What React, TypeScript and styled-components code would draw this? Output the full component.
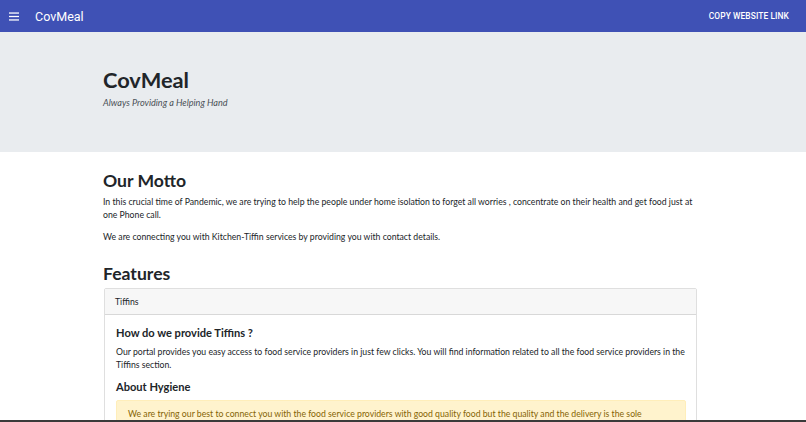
import React from 'react';
import styled, { createGlobalStyle } from 'styled-components';

const GlobalStyle = createGlobalStyle`
  html, body {
    margin: 0;
    padding: 0;
    background: #ffffff;
  }
  body {
    font-family: Lato, "Open Sans", sans-serif;
    color: #212529;
    overflow: hidden;
  }
  * {
    box-sizing: border-box;
  }
`;

const AppBar = styled.header`
  height: 32px;
  background: #3f51b5;
  display: flex;
  align-items: center;
  padding: 0 17px 0 9px;
  box-shadow: 0 1px 2px rgba(0, 0, 0, 0.25);
  font-family: Roboto, "Liberation Sans", sans-serif;
  color: #ffffff;
`;

const MenuButton = styled.button`
  background: none;
  border: none;
  padding: 0;
  margin-right: 16px;
  width: 10px;
  height: 10px;
  display: flex;
  align-items: center;
  justify-content: center;
  color: #ffffff;
`;

const Brand = styled.div`
  font-size: 12.5px;
  flex: 1;
`;

const CopyLink = styled.button`
  background: none;
  border: none;
  padding: 0;
  color: #ffffff;
  font-family: Roboto, "Liberation Sans", sans-serif;
  font-size: 8.4px;
  font-weight: 500;
  letter-spacing: 0.1px;
  text-transform: uppercase;
`;

const Jumbotron = styled.section`
  background: #e9ecef;
  height: 120px;
  padding: 35px 0 0 103px;
`;

const JumboTitle = styled.h1`
  margin: 0;
  font-size: 21.8px;
  font-weight: 700;
  line-height: 1.2;
  color: #212529;
`;

const Tagline = styled.p`
  margin: 4px 0 0;
  font-size: 9.1px;
  font-style: italic;
  color: #495057;
`;

const Container = styled.main`
  width: 594px;
  margin-left: 103px;
  padding-top: 18px;
`;

const SectionTitle = styled.h2`
  margin: 0 0 3px;
  font-size: 17.6px;
  font-weight: 700;
  line-height: 1.25;
  color: #212529;
`;

const Paragraph = styled.p`
  margin: 0 0 9px;
  font-size: 8.7px;
  line-height: 13px;
  color: #212529;
`;

const Spacer = styled.div<{ $h: number }>`
  height: ${(p) => p.$h}px;
`;

const Card = styled.div`
  border: 1px solid rgba(0, 0, 0, 0.125);
  border-radius: 2px;
  margin-left: 1px;
  margin-top: 1px;
`;

const CardHeader = styled.div`
  background: #f7f7f7;
  border-bottom: 1px solid rgba(0, 0, 0, 0.125);
  height: 26px;
  display: flex;
  align-items: center;
  padding: 0 10px;
  font-size: 8.7px;
  color: #212529;
`;

const CardBody = styled.div`
  padding: 11px 10px 10px 11px;
`;

const CardTitle = styled.h4`
  margin: 0 0 5px;
  font-size: 11.1px;
  font-weight: 700;
  line-height: 1.3;
  color: #212529;
`;

const Alert = styled.div`
  background: #fff3cd;
  border: 1px solid #ffeeba;
  border-radius: 2px;
  color: #856404;
  padding: 6px 11px;
  font-size: 8.7px;
  line-height: 13px;
`;

const BottomEdge = styled.div`
  position: fixed;
  left: 0;
  right: 0;
  bottom: 0;
  height: 2px;
  background: #3a3a3a;
`;

function MenuIcon() {
  return (
    <svg width="11" height="9" viewBox="0 0 11 9" fill="currentColor">
      <rect x="0" y="0" width="11" height="1.4" />
      <rect x="0" y="3.8" width="11" height="1.4" />
      <rect x="0" y="7.6" width="11" height="1.4" />
    </svg>
  );
}

export default function App(): React.ReactElement {
  return (
    <>
      <GlobalStyle />
      <AppBar>
        <MenuButton aria-label="menu">
          <MenuIcon />
        </MenuButton>
        <Brand>CovMeal</Brand>
        <CopyLink>Copy Website Link</CopyLink>
      </AppBar>

      <Jumbotron>
        <JumboTitle>CovMeal</JumboTitle>
        <Tagline>Always Providing a Helping Hand</Tagline>
      </Jumbotron>

      <Container>
        <SectionTitle>Our Motto</SectionTitle>
        <Paragraph>
          In this crucial time of Pandemic, we are trying to help the people under home isolation to forget all worries , concentrate on their health and get food just at one Phone call.
        </Paragraph>
        <Paragraph>
          We are connecting you with Kitchen-Tiffin services by providing you with contact details.
        </Paragraph>

        <Spacer $h={11} />
        <SectionTitle>Features</SectionTitle>
        <Card>
          <CardHeader>Tiffins</CardHeader>
          <CardBody>
            <CardTitle>How do we provide Tiffins ?</CardTitle>
            <Paragraph>
              Our portal provides you easy access to food service providers in just few clicks. You will find information related to all the food service providers in the Tiffins section.
            </Paragraph>
            <CardTitle>About Hygiene</CardTitle>
            <Alert>
              We are trying our best to connect you with the food service providers with good quality food but the quality and the delivery is the sole responsibility of the food service providers.
            </Alert>
          </CardBody>
        </Card>
      </Container>
      <BottomEdge />
    </>
  );
}
